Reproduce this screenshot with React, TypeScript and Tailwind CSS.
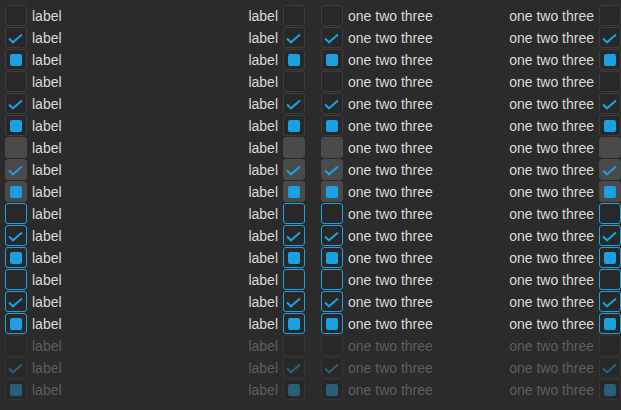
import React from "react";

type State = "normal" | "hover" | "focus" | "disabled";
type Val = "off" | "on" | "mixed";

const rows: { s: State; v: Val }[] = [];
const states: State[] = ["normal", "normal", "hover", "focus", "focus", "disabled"];
for (const s of states) for (const v of ["off", "on", "mixed"] as Val[]) rows.push({ s, v });

function Box({ s, v }: { s: State; v: Val }) {
  const cls =
    s === "hover"
      ? "bg-[#4a4a4a] border-[#4a4a4a]"
      : s === "focus"
      ? "bg-[#282828] border-[#1ba1e2]"
      : s === "disabled"
      ? "bg-[#282828] border-[#353535]"
      : "bg-[#282828] border-[#3c3c3c]";
  const blue = s === "disabled" ? "#2a5f7a" : "#1ba1e2";
  return (
    <div className={`relative w-[22px] h-[21px] shrink-0 rounded-[3px] border ${cls} flex items-center justify-center`}>
      {v === "on" && (
        <svg width="22" height="21" viewBox="0 0 22 21" className="absolute left-[-1px] top-[-1px]">
          <path d="M4 11.5 L8 15.3 L17 7.5" fill="none" stroke={blue} strokeWidth="2" />
        </svg>
      )}
      {v === "mixed" && <div className="w-[12px] h-[12px] rounded-[2px]" style={{ background: blue }} />}
    </div>
  );
}

export default function App() {
  return (
    <div
      className="w-[621px] h-[410px] overflow-hidden bg-[#2b2b2b] pl-[5px] pt-[5px] text-[14px] leading-none"
      style={{ fontFamily: '"Liberation Sans", Arial, sans-serif' }}
    >
      {rows.map((r, i) => {
        const tc = r.s === "disabled" ? "text-[#5e5e5e]" : "text-[#dadada]";
        return (
          <div key={i} className="flex h-[22px] w-[621px]">
            <div className="flex w-[300px] items-start">
              <Box s={r.s} v={r.v} />
              <span className={`ml-[5px] mt-[4px] ${tc}`}>label</span>
              <span className={`ml-auto mr-[5px] mt-[4px] ${tc}`}>label</span>
              <Box s={r.s} v={r.v} />
            </div>
            <div className="flex w-[300px] ml-[16px] items-start">
              <Box s={r.s} v={r.v} />
              <span className={`ml-[5px] mt-[4px] ${tc}`}>one two three</span>
              <span className={`ml-auto mr-[5px] mt-[4px] ${tc}`}>one two three</span>
              <Box s={r.s} v={r.v} />
            </div>
          </div>
        );
      })}
    </div>
  );
}
